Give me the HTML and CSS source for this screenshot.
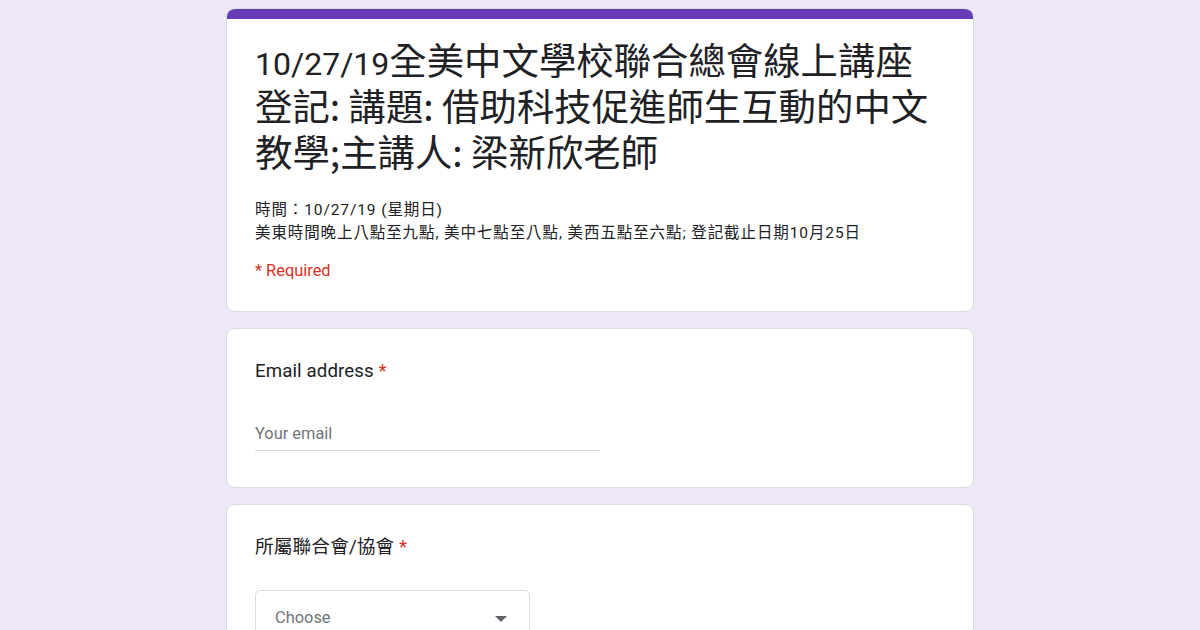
FILE: index.html
```html
<!DOCTYPE html>
<html lang="zh-Hant">
<head>
    <meta charset="UTF-8">
    <meta name="viewport" content="width=device-width, initial-scale=1.0">
    <title>10/27/19全美中文學校聯合總會線上講座登記</title>
    <link rel="stylesheet" href="styles.css">
</head>
<body>
    <div class="form">
        <!-- Cabeçalho do formulário -->
        <div class="card header-card">
            <div class="accent"></div>
            <div class="card-body">
                <h1 class="form-title"><span class="latin">10/27/19</span>全美中文學校聯合總會線上講座登記: 講題: 借助科技促進師生互動的中文教學;主講人: 梁新欣老師</h1>
                <div class="form-desc">
                    時間：10/27/19 (星期日)<br>
                    美東時間晚上八點至九點, 美中七點至八點, 美西五點至六點; 登記截止日期10月25日
                </div>
                <div class="required-note">* Required</div>
            </div>
        </div>

        <div class="card">
            <div class="card-body">
                <div class="question">Email address <span class="star">*</span></div>
                <div class="text-input">Your email</div>
            </div>
        </div>

        <div class="card">
            <div class="card-body">
                <div class="question">所屬聯合會/協會 <span class="star">*</span></div>
                <div class="select">
                    <span>Choose</span>
                    <svg class="arrow" width="12" height="6" viewBox="0 0 12 6"><path d="M0 0h12L6 6z" fill="#5f6368"/></svg>
                </div>
            </div>
        </div>
    </div>
</body>
</html>
```

FILE: styles.css
```css
body {
    font-family: Roboto, "Noto Sans CJK TC", sans-serif;
    background-color: #ede7f6;
    color: #202124;
    margin: 0;
    padding: 0;
}
.form {
    width: 748px;
    margin: 0 auto;
    padding-top: 8px;
    display: flex;
    flex-direction: column;
    gap: 16px;
}
.card {
    background-color: #fff;
    border: 1px solid #dadce0;
    border-radius: 9px;
    overflow: hidden;
}
.accent {
    height: 10px;
    background-color: #673ab7;
}
.card-body {
    padding: 28px 28px 28px 28px;
}
.header-card .card-body {
    padding-top: 17px;
    padding-bottom: 29px;
}
.form-title {
    font-family: "Noto Sans CJK TC", sans-serif;
    font-size: 37.4px;
    font-weight: 400;
    line-height: 46px;
    margin: 0;
}
.form-title .latin {
    font-family: Roboto, sans-serif;
    font-size: 32px;
    line-height: 1;
}
.form-desc {
    font-size: 15.5px;
    line-height: 23px;
    margin-top: 25px;
    letter-spacing: 0.9px;
}
.required-note {
    color: #d93025;
    font-size: 16.4px;
    line-height: 23px;
    margin-top: 14px;
}
.question {
    font-size: 18.7px;
    line-height: 28px;
    letter-spacing: 0.1px;
}
.star {
    color: #d93025;
}
.text-input {
    width: 345px;
    margin-top: 38px;
    padding-bottom: 5px;
    border-bottom: 1px solid #dadce0;
    color: #70757a;
    font-size: 16.4px;
    line-height: 22px;
    margin-bottom: 8px;
}
.select {
    width: 275px;
    height: 56px;
    box-sizing: border-box;
    margin-top: 29px;
    border: 1px solid #dadce0;
    border-radius: 5px;
    display: flex;
    align-items: center;
    justify-content: space-between;
    padding: 0 22px 1px 19px;
    color: #70757a;
    font-size: 16.4px;
}
.arrow {
    margin-top: 2px;
}
```
